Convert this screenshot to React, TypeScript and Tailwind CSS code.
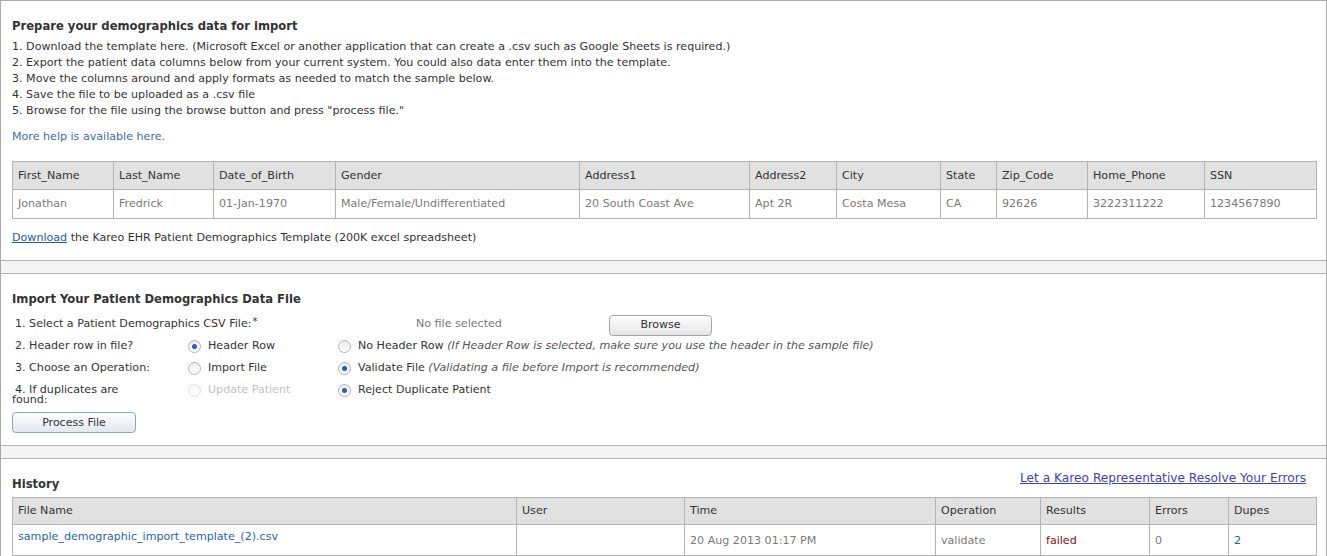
import React from 'react';
import clsx from 'clsx';

const sampleCols = [
  { h: 'First_Name', v: 'Jonathan', w: 'w-[101px]' },
  { h: 'Last_Name', v: 'Fredrick', w: 'w-[100px]' },
  { h: 'Date_of_Birth', v: '01-Jan-1970', w: 'w-[122px]' },
  { h: 'Gender', v: 'Male/Female/Undifferentiated', w: 'w-[244px]' },
  { h: 'Address1', v: '20 South Coast Ave', w: 'w-[170px]' },
  { h: 'Address2', v: 'Apt 2R', w: 'w-[87px]' },
  { h: 'City', v: 'Costa Mesa', w: 'w-[104px]' },
  { h: 'State', v: 'CA', w: 'w-[56px]' },
  { h: 'Zip_Code', v: '92626', w: 'w-[91px]' },
  { h: 'Home_Phone', v: '3222311222', w: 'w-[117px]' },
  { h: 'SSN', v: '1234567890', w: 'w-[112px]' },
];

const historyCols = [
  { h: 'File Name', w: 'w-[504px]' },
  { h: 'User', w: 'w-[168px]' },
  { h: 'Time', w: 'w-[251px]' },
  { h: 'Operation', w: 'w-[105px]' },
  { h: 'Results', w: 'w-[109px]' },
  { h: 'Errors', w: 'w-[79px]' },
  { h: 'Dupes', w: 'w-[88px]' },
];

const steps = [
  '1. Download the template here. (Microsoft Excel or another application that can create a .csv such as Google Sheets is required.)',
  '2. Export the patient data columns below from your current system. You could also data enter them into the template.',
  '3. Move the columns around and apply formats as needed to match the sample below.',
  '4. Save the file to be uploaded as a .csv file',
  '5. Browse for the file using the browse button and press "process file."',
];

const Radio: React.FC<{ checked?: boolean; disabled?: boolean }> = ({ checked, disabled }) => (
  <span
    className={clsx(
      'inline-flex w-[13px] h-[13px] shrink-0 items-center justify-center rounded-full border',
      disabled ? 'border-[#e0e0e0] bg-[#fbfbfb]' : 'border-[#b4b4b4] bg-linear-to-b from-[#ececec] to-white'
    )}
  >
    {checked && <span className="w-[5px] h-[5px] rounded-full bg-[#1c62b9]" />}
  </span>
);

const Option: React.FC<{ checked?: boolean; disabled?: boolean; children: React.ReactNode }> = ({ checked, disabled, children }) => (
  <div className="flex items-center pl-[2px]">
    <Radio checked={checked} disabled={disabled} />
    <span className={clsx('ml-[7px] whitespace-nowrap', disabled ? 'text-[#c2c2c2]' : 'text-[#333]')}>{children}</span>
  </div>
);

const Band = () => <div className="h-[14px] border-y border-[#b3b3b3] bg-[#f4f4f4]" />;

export default function App() {
  return (
    <div className="w-[1327px] h-[556px] overflow-hidden bg-white border-t border-x border-[#aaa] font-['DejaVu_Sans',sans-serif] text-[11.1px] leading-[16px] text-[#333]">
      {/* prepare */}
      <section className="h-[259px] px-[11px] pt-[17px]">
        <h2 className="text-[11.6px] font-bold leading-[16px] text-[#333]">Prepare your demographics data for import</h2>
        <ol className="mt-[5px]">
          {steps.map((s) => (
            <li key={s}>{s}</li>
          ))}
        </ol>
        <a className="block mt-[10px] text-[#3a6ea5]">More help is available here.</a>

        <table className="mt-[16px] w-[1304px] table-fixed border-collapse">
          <thead>
            <tr className="bg-[#e1e1e1]">
              {sampleCols.map((c) => (
                <th key={c.h} className={clsx(c.w, 'h-[28px] border border-[#b4b4b4] px-[5px] text-left font-normal text-[#333]')}>
                  {c.h}
                </th>
              ))}
            </tr>
          </thead>
          <tbody>
            <tr>
              {sampleCols.map((c) => (
                <td key={c.h} className="h-[29px] border border-[#b4b4b4] px-[5px] text-[#7a7a7a] whitespace-nowrap">
                  {c.v}
                </td>
              ))}
            </tr>
          </tbody>
        </table>

        <p className="mt-[11px]">
          <a className="text-[#1d5aa8] underline">Download</a> the Kareo EHR Patient Demographics Template (200K excel spreadsheet)
        </p>
      </section>

      <Band />

      {/* import */}
      <section className="h-[171px] px-[11px] pt-[17px]">
        <h2 className="text-[11.6px] font-bold leading-[16px] text-[#333]">Import Your Patient Demographics Data File</h2>

        <div className="mt-[6px] flex h-[22px] items-center">
          <div className="w-[404px] indent-[3px]">
            1. Select a Patient Demographics CSV File:<span className="ml-[1px] align-top text-[10px] leading-[12px]">*</span>
          </div>
          <div className="w-[193px] text-[#777]">No file selected</div>
          <button className="mt-[2px] h-[21px] w-[103px] rounded-[4px] border border-[#a7a7a7] bg-linear-to-b from-white to-[#e4e4e4] text-[11px] text-[#333]">
            Browse
          </button>
        </div>

        <div className="grid grid-cols-[174px_150px_1fr]">
          <div className="flex h-[22px] items-center indent-[3px]">2. Header row in file?</div>
          <div className="flex h-[22px] items-center">
            <Option checked>Header Row</Option>
          </div>
          <div className="flex h-[22px] items-center">
            <Option>
              No Header Row{' '}
              <i className="text-[#555]">(If Header Row is selected, make sure you use the header in the sample file)</i>
            </Option>
          </div>

          <div className="flex h-[22px] items-center indent-[3px]">3. Choose an Operation:</div>
          <div className="flex h-[22px] items-center">
            <Option>Import File</Option>
          </div>
          <div className="flex h-[22px] items-center">
            <Option checked>
              Validate File <i className="text-[#555]">(Validating a file before Import is recommended)</i>
            </Option>
          </div>

          <div className="h-[22px]">
            <div className="w-[135px] pt-[6px] leading-[10px] indent-[3px]">4. If duplicates are found:</div>
          </div>
          <div className="flex h-[22px] items-center">
            <Option disabled>Update Patient</Option>
          </div>
          <div className="flex h-[22px] items-center">
            <Option checked>Reject Duplicate Patient</Option>
          </div>
        </div>

        <button className="mt-[11px] h-[21px] w-[124px] rounded-[4px] border border-[#8ea4be] bg-linear-to-b from-[#fdfeff] to-[#e3e8ee] text-[11px] text-[#333]">
          Process File
        </button>
      </section>

      <Band />

      {/* history */}
      <section className="px-[11px]">
        <div className="flex items-start justify-between pr-[9px]">
          <h2 className="pt-[17px] text-[11.6px] font-bold leading-[16px] text-[#333]">History</h2>
          <a className="pt-[11px] text-[12.2px] text-[#4040c6] underline">Let a Kareo Representative Resolve Your Errors</a>
        </div>

        <table className="mt-[5px] w-[1304px] table-fixed border-collapse">
          <thead>
            <tr className="bg-[#e1e1e1]">
              {historyCols.map((c) => (
                <th key={c.h} className={clsx(c.w, 'h-[27px] border border-[#b4b4b4] px-[5px] text-left font-normal text-[#333]')}>
                  {c.h}
                </th>
              ))}
            </tr>
          </thead>
          <tbody>
            <tr className="text-[#7a7a7a]">
              <td className="h-[31px] border border-[#b4b4b4] px-[5px] pt-[4px] align-top">
                <a className="text-[#2566ad]">sample_demographic_import_template_(2).csv</a>
              </td>
              <td className="border border-[#b4b4b4] px-[5px]" />
              <td className="border border-[#b4b4b4] px-[5px] pt-[1px]">20 Aug 2013 01:17 PM</td>
              <td className="border border-[#b4b4b4] px-[5px] pt-[1px]">validate</td>
              <td className="border border-[#b4b4b4] px-[5px] pt-[1px] text-[#8b1010]">failed</td>
              <td className="border border-[#b4b4b4] px-[5px] pt-[1px]">0</td>
              <td className="border border-[#b4b4b4] px-[5px] pt-[1px] text-[#1d5ea6]">2</td>
            </tr>
          </tbody>
        </table>
      </section>
    </div>
  );
}
